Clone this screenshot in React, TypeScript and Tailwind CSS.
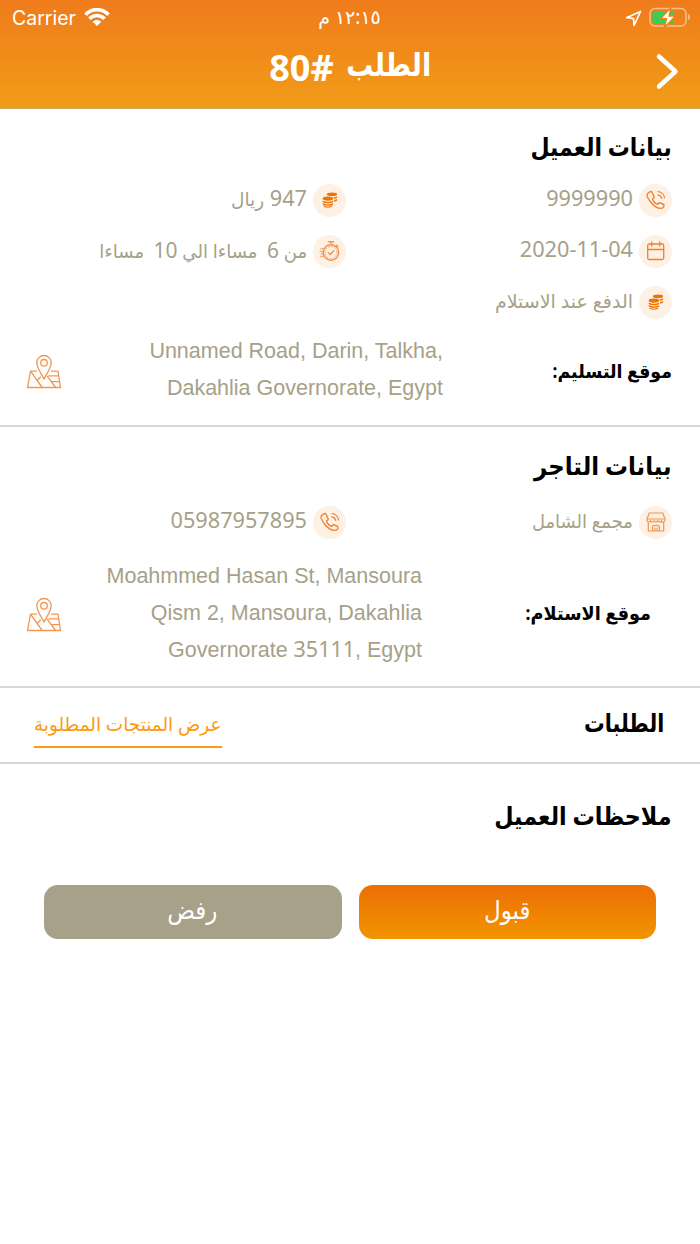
import type { ReactNode } from "react";

const PhoneIcon = () => (
  <svg width="20" height="20" viewBox="0 0 20 20" fill="none" stroke="#f0822f" strokeWidth="1.400" strokeLinecap="round" strokeLinejoin="round">
    <path d="M3.500 2 1.700 3.500C.6 4.600 1.500 8 4.400 11.700c2.900 3.700 6.900 6.700 10 6.700 1.500 0 2.600-.5 3.400-1.600V14.500l-3.600-1.700c-.7-.3-1.200-.1-1.700.5l-.8 1c-2.100-.6-4.500-3-5.200-5.300l1.200-1c.5-.4.6-.9.300-1.500L6 2.300C5.400 1.200 4.500 1.200 3.500 2Z" />
    <path d="M11.800 4.800c2 .3 3.500 1.700 4 3.700M12 1.500c3.300.5 6 3.100 6.600 6.400" strokeWidth="1.200" />
  </svg>
);

const CalendarIcon = () => (
  <svg width="20" height="20" viewBox="0 0 20 20" fill="none" stroke="#f0822f" strokeWidth="1.300" strokeLinecap="round">
    <rect x="1.700" y="3" width="16" height="15.500" rx="1.500" />
    <path d="M1.700 8.500h16M5.700 1v4M13.700 1v4" />
  </svg>
);

const CoinsIcon = () => (
  <svg width="16" height="16" viewBox="0 0 16 16" fill="#ef7300">
    <ellipse cx="10" cy="2.300" rx="5.200" ry="1.900" />
    <path d="M11.500 5.200c1.500-.1 2.800-.4 3.700-1v1.400c-.6.700-1.700 1.100-3 1.300ZM12.200 8c1.300-.2 2.300-.5 2.900-1v1.400c-.5.700-1.500 1.100-2.900 1.300Z" />
    <ellipse cx="5.900" cy="6.600" rx="5.200" ry="2.100" />
    <path d="M.700 8.400c2.600 1.700 7.800 1.700 10.400 0v1.300c-1.300 2-9.100 2-10.400 0ZM.700 11.100c2.600 1.700 7.800 1.700 10.400 0v1.200c-1.300 2-9.100 2-10.400 0ZM.900 13.600c2.600 1.500 7.400 1.500 10 0-.8 2.900-9.200 2.900-10 0Z" />
  </svg>
);

const TimerIcon = () => (
  <svg width="22" height="22" viewBox="0 0 22 22" fill="none" stroke="#f39650" strokeWidth="1.500" strokeLinecap="round">
    <circle cx="12" cy="12.500" r="7.700" />
    <circle cx="12" cy="12.500" r="6" strokeWidth="1" strokeDasharray=".8 2.340" />
    <path d="M9.500 1.800h5M12 2v2.600M17.700 5.300l1.200 1.200M9.300 12.500l2 2 3.600-4" />
    <path d="M2 8.700h3M1 11.200h3M2.300 13.700H4M1.600 16.200h3.600" strokeWidth="1.100" />
  </svg>
);

const ShopIcon = () => (
  <svg width="20" height="20" viewBox="0 0 20 20" fill="none" stroke="#f39650" strokeWidth="1.200" strokeLinejoin="round">
    <path d="M3.200 1h13.600l2.200 6H1ZM1 7v1.300c0 2.500 3.600 2.500 3.600 0 0 2.500 3.600 2.500 3.600 0 0 2.500 3.600 2.500 3.600 0 0 2.500 3.600 2.500 3.600 0 0 2.500 3.600 2.500 3.600 0V7M2.300 10.500V19h15.400v-8.500M6.500 19v-4c0-2.200 7-2.200 7 0v4M8.800 19v-3.500M11.200 19v-3.500" />
  </svg>
);

const MapIcon = () => (
  <svg width="36" height="35" viewBox="0 0 36 35" fill="none" stroke="#f39650" strokeWidth="1.300" strokeLinejoin="round">
    <path d="M11 17.200H4.500L1.500 33.500h33L32 17.200h-7" />
    <path d="M18 25.200c-2.500-5.700-7.200-11-7.200-16.500a7.200 7.200 0 0 1 14.400 0C25.200 14.200 20.500 19.500 18 25.200Z" />
    <circle cx="18" cy="8.800" r="3.300" />
    <path d="M4.500 17.200 16.200 33.500M11.300 26.300l3.500-3.600M21 21.800l8.600 11.700M22.500 21.800h10.200M25.500 27.600h8" />
  </svg>
);

const InfoItem = ({ icon, children }: { icon: ReactNode; children: ReactNode }) => (
  <div className="flex h-[51px] items-center gap-[6px] whitespace-pre text-[#a6a188]">
    <span className="mb-px flex h-[33px] w-[33px] shrink-0 items-center justify-center rounded-full bg-[#fdf0e4]">
      {icon}
    </span>
    <div className="pb-[5px] text-[21.700px]">{children}</div>
  </div>
);

const App = () => {
  return (
    <div dir="rtl" className="h-[1244px] w-[700px] overflow-hidden bg-white font-['Noto_Sans','DejaVu_Sans',sans-serif] text-black">
      <header className="h-[109px] border-b border-[#d3a265] bg-gradient-to-b from-[#ef7b1b] to-[#f09c17] text-white">
        <div dir="ltr" className="grid h-[36px] grid-cols-3 items-center pr-[9px] pl-[12px]">
          <div className="flex items-center gap-2 font-['Inter',sans-serif] text-[19.500px]">
            <span className="pt-[2px]">Carrier</span>
            <svg width="26" height="20" viewBox="0 0 26 20" fill="none" stroke="white" strokeWidth="3.600">
              <path d="M1.500 6.700C8 0 18 0 24.500 6.700M5.500 10.700c4.300-4.200 10.700-4.200 15 0" />
              <path d="M8.700 13.700c2.400-2.400 6.200-2.400 8.600 0L13 18Z" fill="white" stroke="none" />
            </svg>
          </div>
          <span dir="rtl" className="pr-[4px] pb-[2px] text-center text-[19px]">١٢:١٥ م</span>
          <div className="flex items-center justify-end gap-[7px]">
            <svg width="17" height="17" viewBox="0 0 17 17" fill="none" stroke="white" strokeWidth="1.700" strokeLinejoin="round">
              <path d="M15.500 1.500 1.500 7.700l7 .8.500 7Z" />
            </svg>
            <svg width="42" height="22" viewBox="0 0 42 22">
              <rect x="1" y="1.500" width="36" height="17.500" rx="5" fill="none" stroke="white" strokeOpacity=".5" strokeWidth="1.500" />
              <path d="M39 7v6c2.600-1 2.600-5 0-6Z" fill="white" fillOpacity=".5" />
              <rect x="3.500" y="4" width="21" height="12.500" rx="2.500" fill="#34d158" />
              <path d="M22 .5 11.500 11.700h6L15.500 20.500 26.500 9h-6.300Z" fill="white" stroke="#f0821a" strokeWidth="1.500" />
            </svg>
          </div>
        </div>
        <div className="grid h-[72px] grid-cols-[1fr_auto_1fr] items-center pr-[21px] pl-[21px]">
          <svg width="24" height="38" viewBox="0 0 24 38" fill="none" stroke="white" strokeWidth="4.500" strokeLinecap="round" strokeLinejoin="round">
            <path d="m4 3.500 16.500 15L4 33.500" />
          </svg>
          <h1 className="flex items-center gap-3 pb-[9px] font-bold">
            <span className="-ml-[16px] origin-right scale-x-[0.84] pb-[7px] text-[32px]">الطلب</span>
            <span dir="ltr" className="text-[36px]">80#</span>
          </h1>
        </div>
      </header>

      <section className="h-[318px] border-b-2 border-[#d8d8d8]">
        <h2 className="flex h-[66px] origin-right scale-x-[0.88] items-center pt-[10px] text-[25px] font-bold"><span className="pr-[32px]">بيانات العميل</span></h2>
        <div className="grid grid-cols-[326px_1fr] pr-[28px]">
          <InfoItem icon={<PhoneIcon />}>9999990</InfoItem>
          <InfoItem icon={<CoinsIcon />}>947 <span className="text-[18.500px]">ريال</span></InfoItem>
          <InfoItem icon={<CalendarIcon />}><span dir="ltr">2020-11-04</span></InfoItem>
          <InfoItem icon={<TimerIcon />}>
            <div className="origin-right scale-x-[0.953] text-[19px]">
              من <span className="text-[22px]">6</span>  مساءا الي <span className="text-[22px]">10</span>  مساءا
            </div>
          </InfoItem>
          <InfoItem icon={<CoinsIcon />}><span className="text-[19px]">الدفع عند الاستلام</span></InfoItem>
        </div>
        <div className="flex h-[86px] items-center pr-[28px] pl-[26px]">
          <h3 className="w-[229px] origin-right scale-x-[0.915] text-[19px] font-bold">موقع التسليم:</h3>
          <p dir="ltr" className="w-[320px] pb-[2px] text-right font-['Liberation_Sans',sans-serif] text-[21.500px] leading-[37px] whitespace-nowrap text-[#a6a188]">
            Unnamed Road, Darin, Talkha,
            <br />
            Dakahlia Governorate, Egypt
          </p>
          <div className="mr-auto"><MapIcon /></div>
        </div>
      </section>

      <section className="h-[261px] border-b-2 border-[#d8d8d8]">
        <h2 className="flex h-[70px] origin-right scale-x-[0.914] items-center pt-[7px] text-[25px] font-bold"><span className="pr-[31px]">بيانات التاجر</span></h2>
        <div className="grid grid-cols-[326px_1fr] pr-[28px]">
          <InfoItem icon={<ShopIcon />}><div className="origin-right scale-x-[0.945] pt-[3px] text-[19px]">مجمع الشامل</div></InfoItem>
          <InfoItem icon={<PhoneIcon />}>05987957895</InfoItem>
        </div>
        <div className="flex h-[131px] items-center pr-[49px] pl-[26px]">
          <h3 className="w-[229px] origin-right scale-x-[0.93] text-[19px] font-bold">موقع الاستلام:</h3>
          <p dir="ltr" className="w-[320px] pb-[1px] text-right font-['Liberation_Sans',sans-serif] text-[21.500px] leading-[37px] whitespace-nowrap text-[#a6a188]">
            Moahmmed Hasan St, Mansoura
            <br />
            Qism 2, Mansoura, Dakahlia
            <br />
            Governorate <span className="font-['Noto_Sans'] leading-none">35111</span>, Egypt
          </p>
          <div className="mr-auto pt-[2px]"><MapIcon /></div>
        </div>
      </section>

      <section className="flex h-[76px] items-center justify-between border-b-2 border-[#d8d8d8] pr-[36px] pl-[34px]">
        <h2 className="origin-right scale-x-[0.825] pb-[5px] text-[25px] font-bold">الطلبات</h2>
        <a href="#" className="flex h-[46px] w-[188px] items-center justify-center border-b-2 border-[#fb9a13] whitespace-nowrap text-[#fb9a13]">
          <span className="scale-x-[0.97] text-[19px]">عرض المنتجات المطلوبة</span>
        </a>
      </section>

      <section>
        <h2 className="flex h-[121px] origin-right scale-x-[0.89] items-center pb-[18px] text-[25px] font-bold"><span className="pr-[32px]">ملاحظات العميل</span></h2>
        <div className="grid grid-cols-2 gap-[17px] px-[44px] text-[25px] text-white">
          <button className="h-[54px] rounded-[14px] bg-gradient-to-b from-[#ec6e05] to-[#f29400] pb-[4px]"><span className="inline-block scale-x-[0.92]">قبول</span></button>
          <button className="h-[54px] rounded-[14px] bg-[#a6a188] pb-[4px]"><span className="inline-block scale-x-[0.92]">رفض</span></button>
        </div>
      </section>
    </div>
  );
};

export default App;
